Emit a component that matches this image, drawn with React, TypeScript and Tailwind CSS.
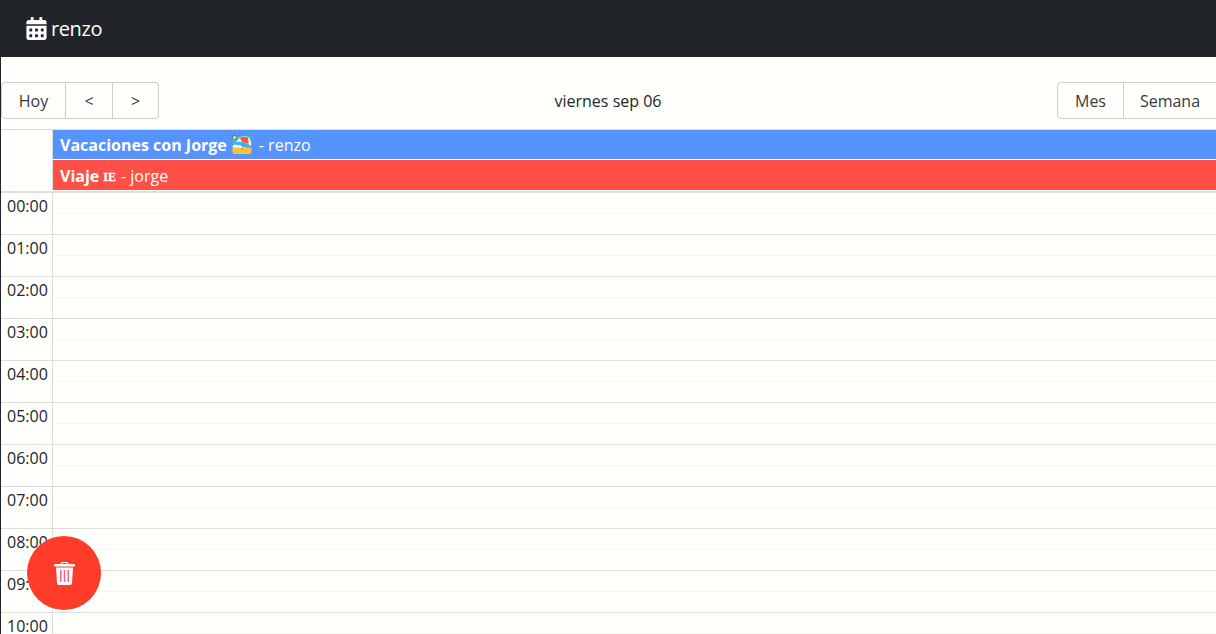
import { FaCalendarAlt } from 'react-icons/fa';

const hours = ['00:00', '01:00', '02:00', '03:00', '04:00', '05:00', '06:00', '07:00', '08:00', '09:00', '10:00'];

function BeachIcon() {
  return (
    <svg viewBox="0 0 20 20" className="w-[20px] h-[20px] inline-block">
      <rect x="0.5" y="1" width="19" height="18" rx="2" fill="#3fb4e6" />
      <path d="M0.5 11 L19.5 13 V17 a2 2 0 0 1 -2 2 H2.5 a2 2 0 0 1 -2 -2 Z" fill="#f9c23c" />
      <path d="M1 10 Q8 9 13 13 L1 12.5 Z" fill="#e9f8fc" />
      <path d="M4 7 Q8 0.5 15 1.5 Q20 4 19 11 Q12 6 4 7 Z" fill="#f6f1e8" />
      <path d="M8 3 Q12 1 15.5 2 Q17 5 16.5 9 Q13 7 9.5 6.5 Z" fill="#ef5a3c" />
      <path d="M12 7 L10 15" stroke="#8a7560" strokeWidth="0.7" />
      <circle cx="2.5" cy="2.5" r="2" fill="#ffe14d" stroke="#333" strokeWidth="0.5" />
    </svg>
  );
}

function TrashIcon() {
  return (
    <svg viewBox="0 0 21 23" className="w-[21px] h-[23px]">
      <path d="M7 2.5 Q7 0.5 9 0.5 H12 Q14 0.5 14 2.5" fill="none" stroke="white" strokeWidth="1.2" />
      <rect x="0" y="2" width="21" height="2.6" rx="1" fill="white" />
      <path d="M2 5.6 H19 L18 21 Q17.9 23 16 23 H5 Q3.1 23 3 21 Z" fill="white" />
      <rect x="6" y="8" width="1.5" height="12" fill="#f2608c" />
      <rect x="9.75" y="8" width="1.5" height="12" fill="#f2608c" />
      <rect x="13.5" y="8" width="1.5" height="12" fill="#f2608c" />
    </svg>
  );
}

export default function App() {
  return (
    <div className="relative h-screen overflow-hidden bg-[#fffffc] text-[#212529] font-['Open_Sans','Noto_Sans',sans-serif]">
      <nav className="h-[57px] bg-[#212529] flex items-center pl-[25px] text-white">
        <FaCalendarAlt className="text-[23px] mr-[3px]" />
        <span className="text-[20px] leading-none tracking-[-0.4px]">renzo</span>
      </nav>

      <div className="border-l border-[#212529]">
        <div className="flex items-start justify-between h-[72px] pt-[25px] w-[1239px] text-[16px]">
          <div className="flex h-[37px] text-[#373a3c]">
            <button className="w-[65px] border border-[#cccccc] rounded-l">Hoy</button>
            <button className="w-[47px] border-y border-r border-[#cccccc]">&lt;</button>
            <button className="w-[46px] border-y border-r border-[#cccccc] rounded-r">&gt;</button>
          </div>
          <span className="leading-[37px] mt-[1px]">viernes sep 06</span>
          <div className="flex h-[37px] text-[#373a3c]">
            <button className="w-[67px] border border-[#cccccc] rounded-l">Mes</button>
            <button className="w-[93px] border-y border-r border-[#cccccc]">Semana</button>
            <button className="w-[23px] border-y border-r border-[#cccccc] rounded-r" />
          </div>
        </div>

        <div className="border-t border-[#dddddd]">
          <div className="flex pb-[1px] border-b-2 border-[#dddddd]">
            <div className="w-[52px] shrink-0 border-r border-[#dddddd]" />
            <div className="flex-1 text-white text-[16px]">
              <div className="h-[29px] bg-[#5593ff] flex items-center pl-[7px] mb-[1px]">
                <b className="font-bold">Vacaciones con Jorge</b>
                <span className="ml-[5px] mr-[7px] flex items-center"><BeachIcon /></span>
                <span>- renzo</span>
              </div>
              <div className="h-[30px] bg-[#ff4f46] flex items-center pl-[7px] pt-[1px]">
                <b className="font-bold">Viaje</b>
                <b className="font-['Liberation_Serif',serif] text-[12px] ml-[4px] mr-[5px] mt-[2px] [-webkit-text-stroke:0.3px_white]">IE</b>
                <span>- jorge</span>
              </div>
            </div>
          </div>

          {hours.map((h) => (
            <div key={h} className="flex h-[42px] border-b border-[#dddddd]">
              <div className="w-[52px] shrink-0 border-r border-[#dddddd] pl-[6px] pt-[1px] text-[16px] leading-[24px]">{h}</div>
              <div className="flex-1">
                <div className="h-[21px] border-b border-[#f5f5f0]" />
              </div>
            </div>
          ))}
        </div>
      </div>

      <button className="absolute left-[27px] top-[536px] w-[74px] h-[74px] rounded-full bg-[#ff3b2a] text-white flex items-center justify-center">
        <TrashIcon />
      </button>
    </div>
  );
}
